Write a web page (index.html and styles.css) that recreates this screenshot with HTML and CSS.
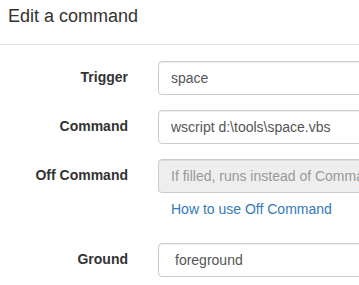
FILE: index.html
```html
<!DOCTYPE html>
<html>
<head>
    <meta charset="UTF-8">
    <title>Edit a command</title>
    <link rel="stylesheet" href="styles.css">
</head>
<body>
    <div class="modal">
        <div class="modal-header">
            <h4 class="modal-title">Edit a command</h4>
        </div>

        <form class="modal-body">
            <div class="form-group">
                <label class="control-label">Trigger</label>
                <div class="field">
                    <input type="text" class="form-control" value="space">
                </div>
            </div>

            <div class="form-group">
                <label class="control-label">Command</label>
                <div class="field">
                    <input type="text" class="form-control" value="wscript d:\tools\space.vbs">
                </div>
            </div>

            <div class="form-group">
                <label class="control-label">Off Command</label>
                <div class="field">
                    <input type="text" class="form-control" placeholder="If filled, runs instead of Command when toggled off" disabled>
                    <a class="help-block" href="#">How to use Off Command</a>
                </div>
            </div>

            <div class="form-group">
                <label class="control-label">Ground</label>
                <div class="field">
                    <select class="form-control">
                        <option>foreground</option>
                        <option>background</option>
                    </select>
                </div>
            </div>
        </form>
    </div>
</body>
</html>
```

FILE: styles.css
```css
body { margin: 0; background: #fff; font-family: "Liberation Sans", Arial, sans-serif; font-size: 14px; line-height: 1.42857; color: #333; }
.modal { overflow: hidden; }
.modal-header { padding: 4px 15px 14px 8px; border-bottom: 1px solid #e5e5e5; }
.modal-title { margin: 0; font-size: 18px; font-weight: normal; line-height: 1.42857; color: #333; }
.modal-body { padding-top: 16px; }
.form-group { display: flex; margin-bottom: 15px; }
.control-label { width: 128px; padding: 7px 15px 0 0; text-align: right; font-weight: bold; flex-shrink: 0; }
.field { padding-left: 15px; width: 440px; flex-shrink: 0; }
.form-control { display: block; width: 100%; height: 34px; padding: 6px 12px; font-family: inherit; font-size: 14px; line-height: 1.42857; color: #555; background: #fff; border: 1px solid #ccc; border-radius: 4px; box-shadow: inset 0 1px 1px rgba(0,0,0,.075); box-sizing: border-box; }
.form-control::placeholder { color: #999; }
.form-control:disabled { background: #eee; cursor: not-allowed; }
.help-block { display: block; margin: 7px 0 8px; padding-left: 13px; color: #337ab7; text-decoration: none; }
```
